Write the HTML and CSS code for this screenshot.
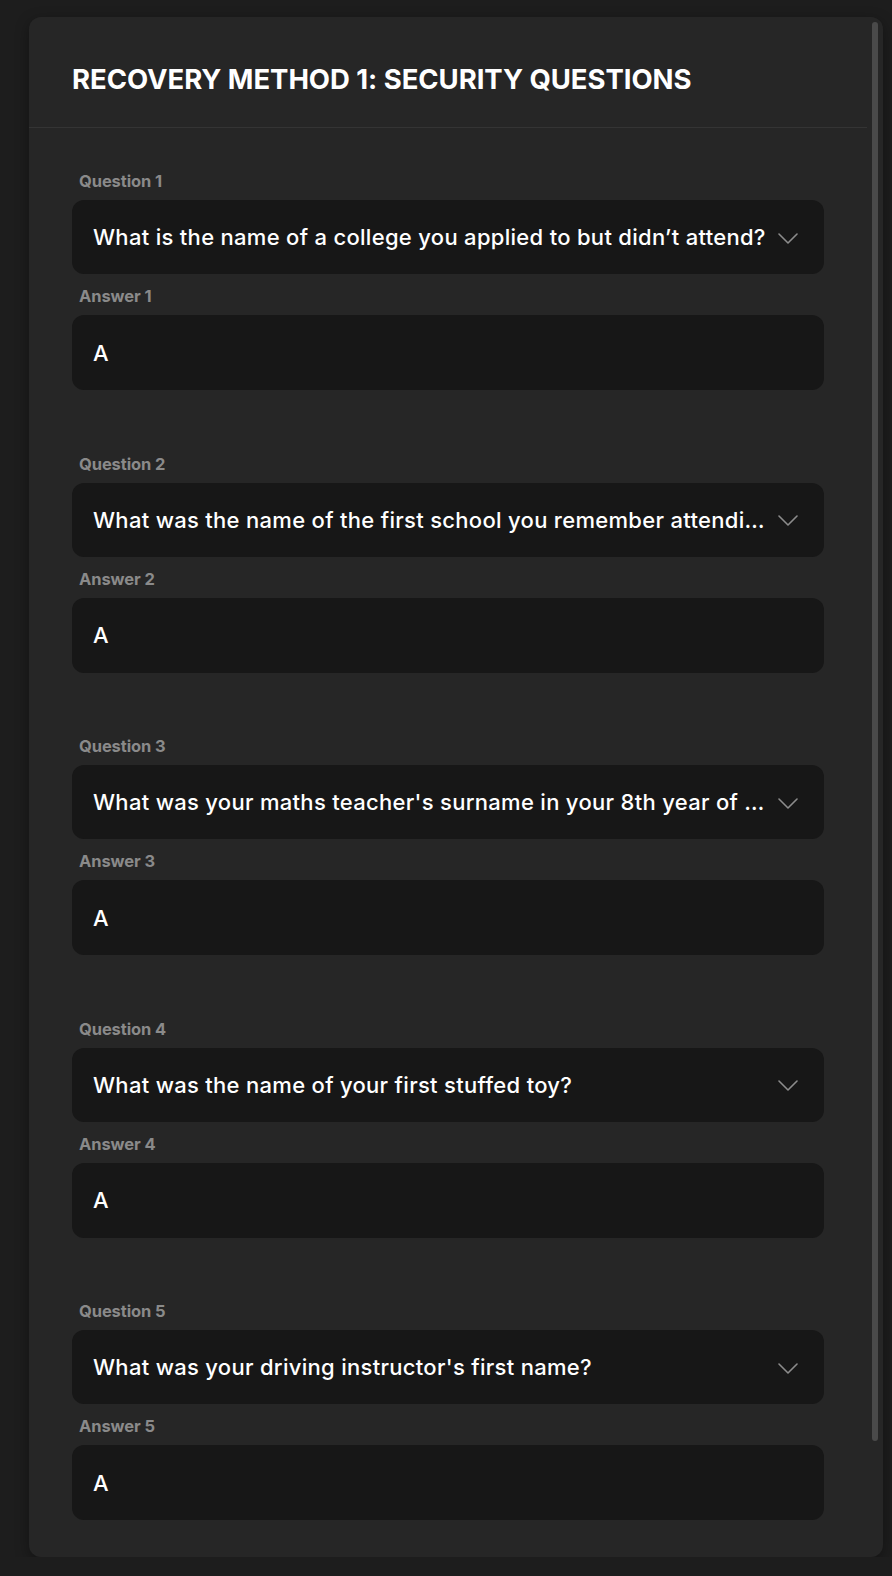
FILE: index.html
```html
<!DOCTYPE html>
<html lang="en">
<head>
<meta charset="utf-8">
<title>Recovery Method 1: Security Questions</title>
<link rel="stylesheet" href="styles.css">
</head>
<body>
<div class="card">
  <div class="card-main">
    <div class="card-header">
      <h1 class="title">RECOVERY METHOD 1: SECURITY QUESTIONS</h1>
    </div>
    <div class="card-body">
      <div class="group">
        <label class="label">Question 1</label>
        <div class="select"><span class="select-text">What is the name of a college you applied to but didn’t attend?</span><svg class="chevron" width="20" height="11" viewBox="0 0 20 11"><polyline points="1,1 10,10 19,1" fill="none" stroke="#8c8c8c" stroke-width="1.6" stroke-linecap="round" stroke-linejoin="round"/></svg></div>
        <label class="label label-answer">Answer 1</label>
        <div class="input">A</div>
      </div>
      <div class="group">
        <label class="label">Question 2</label>
        <div class="select"><span class="select-text">What was the name of the first school you remember attending?</span><svg class="chevron" width="20" height="11" viewBox="0 0 20 11"><polyline points="1,1 10,10 19,1" fill="none" stroke="#8c8c8c" stroke-width="1.6" stroke-linecap="round" stroke-linejoin="round"/></svg></div>
        <label class="label label-answer">Answer 2</label>
        <div class="input">A</div>
      </div>
      <div class="group">
        <label class="label">Question 3</label>
        <div class="select"><span class="select-text">What was your maths teacher's surname in your 8th year of school?</span><svg class="chevron" width="20" height="11" viewBox="0 0 20 11"><polyline points="1,1 10,10 19,1" fill="none" stroke="#8c8c8c" stroke-width="1.6" stroke-linecap="round" stroke-linejoin="round"/></svg></div>
        <label class="label label-answer">Answer 3</label>
        <div class="input">A</div>
      </div>
      <div class="group">
        <label class="label">Question 4</label>
        <div class="select"><span class="select-text">What was the name of your first stuffed toy?</span><svg class="chevron" width="20" height="11" viewBox="0 0 20 11"><polyline points="1,1 10,10 19,1" fill="none" stroke="#8c8c8c" stroke-width="1.6" stroke-linecap="round" stroke-linejoin="round"/></svg></div>
        <label class="label label-answer">Answer 4</label>
        <div class="input">A</div>
      </div>
      <div class="group">
        <label class="label">Question 5</label>
        <div class="select"><span class="select-text">What was your driving instructor's first name?</span><svg class="chevron" width="20" height="11" viewBox="0 0 20 11"><polyline points="1,1 10,10 19,1" fill="none" stroke="#8c8c8c" stroke-width="1.6" stroke-linecap="round" stroke-linejoin="round"/></svg></div>
        <label class="label label-answer">Answer 5</label>
        <div class="input">A</div>
      </div>
    </div>
  </div>
  <div class="scroll-gutter"><div class="scroll-thumb"></div></div>
</div>
</body>
</html>
```

FILE: styles.css
```css
html, body {
  margin: 0;
  padding: 0;
  background: #1d1d1d;
}
body {
  font-family: Inter, "Noto Sans", sans-serif;
  color: #ffffff;
  padding: 17px 9px 0 29px;
}
.card {
  display: flex;
  width: 854px;
  height: 1540px;
  background: #262626;
  border-radius: 12px;
  box-shadow: 0 4px 14px rgba(0, 0, 0, 0.35);
  overflow: hidden;
}
.card-main {
  flex: 1;
  min-width: 0;
}
.card-header {
  height: 111px;
  box-sizing: border-box;
  padding: 46px 43px 0 43px;
  border-bottom: 1px solid #343434;
}
.title {
  margin: 0;
  font-size: 27.5px;
  font-weight: 700;
  letter-spacing: -0.05px;
  line-height: 32px;
  color: #ffffff;
  white-space: nowrap;
}
.card-body {
  padding: 43px 43px 0 43px;
  display: flex;
  flex-direction: column;
  gap: 63.5px;
}
.group {
  display: flex;
  flex-direction: column;
}
.label {
  display: block;
  height: 20px;
  line-height: 20px;
  font-size: 16.5px;
  font-weight: 700;
  letter-spacing: -0.1px;
  color: #8a8a8a;
  padding-left: 7px;
  margin-bottom: 9px;
}
.label-answer {
  margin-top: 12px;
}
.select, .input {
  height: 74px;
  box-sizing: border-box;
  background: #171717;
  border-radius: 12px;
  display: flex;
  align-items: center;
  padding: 0 26px 0 21px;
  font-size: 22px;
  font-weight: 500;
  letter-spacing: 0.3px;
  color: #ffffff;
}
.input {
  height: 75px;
}
.select-text {
  flex: 1;
  min-width: 0;
  white-space: nowrap;
  overflow: hidden;
  text-overflow: ellipsis;
  margin-right: 11px;
}
.chevron {
  flex: none;
  margin-top: 2px;
}
.scroll-gutter {
  width: 16px;
  flex: none;
  padding-top: 5px;
  box-sizing: border-box;
}
.scroll-thumb {
  width: 6px;
  height: 1419px;
  margin: 0 auto;
  border-radius: 3px;
  background: #4a4a4a;
}
```
